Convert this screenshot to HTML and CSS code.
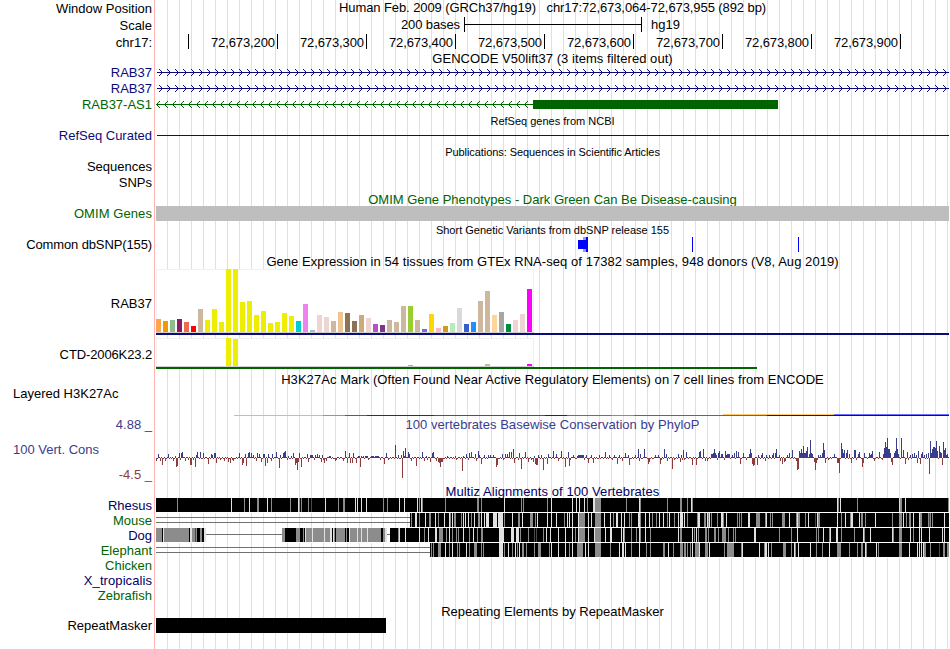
FILE: index.html
```html
<!doctype html>
<html lang="en-US">
<head>
<meta charset="utf-8" />
<meta name="viewport" content="width=device-width" />
<title>chr17:72,673,064-72,673,955</title>
<link rel="stylesheet" href="styles.css">
</head>
<body>
<div class="browser">
	<div class="row h16"><div class="label drop">Window Position</div><div class="title position">Human Feb. 2009 (GRCh37/hg19) &nbsp; chr17:72,673,064-72,673,955 (892 bp)</div></div>
	<div class="row h17"><div class="label drop">Scale</div>
		<svg class="track" id="scale" viewBox="156 0 794 17" height="17">
			<text x="460" y="13" text-anchor="end" textLength="59">200 bases</text>
			<rect x="464" y="1" width="1" height="15" /><rect x="464" y="8" width="178" height="1" /><rect x="641" y="1" width="1" height="15" />
			<text x="651" y="13">hg19</text>
		</svg>
	</div>
	<div class="row h18"><div class="label drop">chr17:</div><svg class="track" id="ruler" viewBox="156 0 794 18" height="18"></svg></div>

	<!-- genes -->
	<div class="row h14"><div class="title drop gencode">GENCODE V50lift37 (3 items filtered out)</div></div>
	<div class="row h15"><div class="label blue">RAB37</div><svg class="track arrows" data-y="7" data-end="949" viewBox="156 0 794 15" height="15"></svg></div>
	<div class="row h16"><div class="label drop blue">RAB37</div><svg class="track arrows" data-y="8" data-end="949" viewBox="156 0 794 16" height="16"></svg></div>
	<div class="row h16"><div class="label drop green">RAB37-AS1</div>
		<svg class="track arrows back" data-y="8" data-end="533" viewBox="156 0 794 16" height="16"><rect x="533" y="4" width="245" height="9" fill="#006400" /></svg>
	</div>
	<div class="row h17"><div class="title drop small refseq">RefSeq genes from NCBI</div></div>
	<div class="row h15 curated"><div class="label blue">RefSeq Curated</div>
		<svg class="track" viewBox="156 0 794 15" height="15"><rect x="157" y="6" width="792" height="1" fill="#0c0c78" /></svg>
	</div>
	<div class="row h15"><div class="title drop small pubs">Publications: Sequences in Scientific Articles</div></div>
	<div class="row h16"><div class="label">Sequences</div></div>
	<div class="row h16"><div class="label">SNPs</div></div>
	<div class="row h15"><div class="title drop green omim">OMIM Gene Phenotypes - Dark Green Can Be Disease-causing</div></div>
	<div class="row h15"><div class="label green wide">OMIM Genes</div><div class="omim-bar"></div></div>

	<!-- variants -->
	<div class="row h16"><div class="title drop small dbsnp">Short Genetic Variants from dbSNP release 155</div></div>
	<div class="row h15"><div class="label tight">Common dbSNP(155)</div>
		<svg class="track" viewBox="156 0 794 15" height="15" fill="#0000ff">
			<rect x="583" y="0" width="3" height="15" fill="#9696ff" />
			<rect x="578" y="3" width="8" height="9" />
			<rect x="586" y="0" width="2" height="15" />
			<rect x="692" y="0" width="1" height="15" />
			<rect x="798" y="0" width="1" height="15" />
		</svg>
	</div>

	<!-- expression -->
	<div class="row h17"><div class="title drop gtex">Gene Expression in 54 tissues from GTEx RNA-seq of 17382 samples, 948 donors (V8, Aug 2019)</div></div>
	<div class="row h69"><div class="label">RAB37</div><svg class="track" id="gtex1" viewBox="156 0 794 69" height="69"></svg></div>
	<div class="row h34"><div class="label tight">CTD-2006K23.2</div><svg class="track" id="gtex2" viewBox="156 0 794 34" height="34"></svg></div>

	<!-- regulation and conservation -->
	<div class="row h15"><div class="title h3k">H3K27Ac Mark (Often Found Near Active Regulatory Elements) on 7 cell lines from ENCODE</div></div>
	<div class="row h31"><div class="label left layered">Layered H3K27Ac</div><svg class="track" id="h3k" viewBox="156 0 794 31" height="31"></svg></div>
	<div class="row h66">
		<div class="limits">
			<div class="label cons">4.88 _</div>
			<div class="label left cons">100 Vert. Cons</div>
			<div class="label neg">-4.5 _</div>
		</div>
		<div>
			<div class="title cons phylop">100 vertebrates Basewise Conservation by PhyloP</div>
			<svg class="track" id="phylop" viewBox="156 0 794 50" height="50"></svg>
		</div>
	</div>

	<!-- alignments -->
	<div class="row h14"><div class="title drop navy multiz">Multiz Alignments of 100 Vertebrates</div></div>
	<div class="row h15"><div class="label navy">Rhesus</div><svg class="track" id="rhesus" viewBox="156 0 794 15" height="15"></svg></div>
	<div class="row h15"><div class="label green">Mouse</div><svg class="track" id="mouse" viewBox="156 0 794 15" height="15"></svg></div>
	<div class="row h15"><div class="label navy">Dog</div><svg class="track" id="dog" viewBox="156 0 794 15" height="15"></svg></div>
	<div class="row h15"><div class="label green">Elephant</div><svg class="track" id="elephant" viewBox="156 0 794 15" height="15"></svg></div>
	<div class="row h15"><div class="label green">Chicken</div></div>
	<div class="row h15"><div class="label navy wide">X_tropicalis</div></div>
	<div class="row h15"><div class="label green">Zebrafish</div></div>

	<div class="row h15"><div class="title drop repeats">Repeating Elements by RepeatMasker</div></div>
	<div class="row h15"><div class="label">RepeatMasker</div><div class="repeat-bar"></div></div>
</div>
<script src="tracks.js"></script>
</body>
</html>
```
FILE: styles.css
```css
body {
	margin: 0;
	background-color: #ffffff;
	color: #000000;
	font-family: "Liberation Sans", Arial, sans-serif;
	font-size: 13px;
	overflow: hidden;
}
.browser {
	width: 950px;
	height: 649px;
	/* red divider, then a guide line every 12px */
	background-image:
		linear-gradient(#ffb4b4, #ffb4b4),
		repeating-linear-gradient(90deg, transparent 0 11px, #dcdcff 11px 12px);
	background-size: 1px 100%, 794px 100%;
	background-position: 154px 0, 156px 0;
	background-repeat: no-repeat;
}
.row {
	display: grid;
	grid-template-columns: 152px 794px;
	column-gap: 4px;
	align-items: start;
}
.h14 { height: 14px; line-height: 14px; }
.h15 { height: 15px; line-height: 15px; }
.h16 { height: 16px; line-height: 16px; }
.h17 { height: 17px; line-height: 17px; }
.h18 { height: 18px; line-height: 18px; }
.h31 { height: 31px; line-height: 13px; }
.h34 { height: 34px; line-height: 34px; }
.h66 { height: 66px; line-height: 14px; }
.h69 { height: 69px; line-height: 69px; }
.curated { line-height: 13px; }
.label {
	text-align: right;
	white-space: nowrap;
}
.left {
	text-align: left;
	padding-left: 13px;
}
.title {
	grid-column: 2;
	text-align: center;
	white-space: nowrap;
	padding-right: 1px;
}
.drop {
	padding-top: 1px;
}
.small {
	font-size: 11px;
}
.tight { letter-spacing: -0.12px; }
.wide { letter-spacing: 0.08px; }
.position { letter-spacing: -0.085px; }
.gencode { letter-spacing: 0.05px; }
.pubs { letter-spacing: -0.065px; }
.gtex { letter-spacing: 0.055px; }
.h3k { letter-spacing: 0.06px; }
.phylop { letter-spacing: 0.04px; }
.multiz { letter-spacing: 0.08px; }
.track {
	display: block;
	width: 794px;
	shape-rendering: crispEdges;
}
.blue { color: #0c0c78; }
.navy { color: #000064; }
.green { color: #006400; }
.cons { color: #3c3c8c; }
.neg { color: #8c3c3c; }
.limits {
	display: flex;
	flex-direction: column;
	justify-content: space-between;
	height: 64px;
}
#phylop {
	margin-top: 2px;
}
.omim-bar {
	width: 793px;
	height: 15px;
	background-color: #bebebe;
}
.repeat-bar {
	width: 230px;
	height: 15px;
	background-color: #000000;
}
```
FILE: tracks.js
```js
const NS = "http://www.w3.org/2000/svg";
const byId = (id) => document.getElementById(id);

function rect(svg, x, y, w, h, fill) {
	const r = document.createElementNS(NS, "rect");
	r.setAttribute("x", x);
	r.setAttribute("y", y);
	r.setAttribute("width", w);
	r.setAttribute("height", h);
	r.setAttribute("fill", fill);
	svg.appendChild(r);
}

// ruler, a tick every 100 bases
for (let i = 0; i < 9; i++) {
	const x = 188 + i * 89;
	rect(byId("ruler"), x, 1, 1, 15, "#000");
	if (i > 0) {
		const t = document.createElementNS(NS, "text");
		t.setAttribute("x", x - 2);
		t.setAttribute("y", 14);
		t.setAttribute("text-anchor", "end");
		t.setAttribute("textLength", 64);
		t.textContent = `72,673,${i + 1}00`;
		byId("ruler").appendChild(t);
	}
}

// introns with strand arrows, drawn pixel by pixel
document.querySelectorAll(".arrows").forEach((svg) => {
	const y = Number(svg.dataset.y);
	const end = Number(svg.dataset.end);
	const back = svg.classList.contains("back");
	const color = back ? "#006400" : "#0c0c78";
	rect(svg, back ? 156 : 157, y, end - (back ? 156 : 157), 1, color);
	for (let x = back ? 156 : 162; x < end - 2; x += 8) {
		for (let d = 1; d < 4; d++) {
			rect(svg, back ? x + d : x - d, y - d, 1, 1, color);
			rect(svg, back ? x + d : x - d, y + d, 1, 1, color);
		}
	}
});

// GTEx tissues
const yellow = Array(13).fill("#eeee00");
const tissues = ["#ffa54f", "#ee9a00", "#8fbc8f", "#8b1c62", "#ee6a50", "#ff0000", "#cdb79e", ...yellow,
	"#00cdcd", "#ee82ee", "#9ac0cd", "#eed5d2", "#eed5d2", "#cdb79e", "#eec591", "#8b7355", "#8b7355", "#cdaa7d",
	"#eed5d2", "#b452cd", "#7a378b", "#cdb79e", "#cdb79e", "#cdb79e", "#9acd32", "#cdb79e", "#7a67ee", "#ffd700",
	"#ffb6c1", "#cd9b1d", "#b4eeb4", "#d9d9d9", "#3a5fcd", "#1e90ff", "#cdb79e", "#cdb79e", "#ffd39b", "#a6a6a6",
	"#008b45", "#eed5d2", "#eed5d2", "#ff00ff"];
const rab37 = [13, 11, 12, 13, 10, 6, 23, 12, 23, 10, 63, 63, 30, 31, 17, 21, 9, 10, 19, 16, 11, 28, 2, 17, 15, 11, 20,
	19, 11, 17, 14, 8, 7, 12, 10, 26, 26, 12, 3, 18, 4, 6, 9, 24, 8, 10, 31, 41, 17, 20, 8, 12, 18, 43];
const ctd = { 10: 28, 11: 27, 36: 1, 47: 2, 53: 2 };

function expression(svg, values, height, lineEnd, lineColor) {
	rect(svg, 156, 0, 378, height + 1, "#f0f0f0");
	rect(svg, 157, 1, 376, height - 1, "#fff");
	rect(svg, 156, height, 378, 1, "#d0d0d0");
	tissues.forEach((color, i) => {
		const h = values[i] || 0;
		if (h > 0) rect(svg, 156 + i * 7, height - h, 5, h, color);
	});
	rect(svg, 156, height + 1, lineEnd - 156, 2, lineColor);
}
expression(byId("gtex1"), rab37, 63, 949, "#0c0c78");
expression(byId("gtex2"), ctd, 28, 757, "#006400");

// H3K27Ac, start, end and color of each piece
[[234, 323, "#87cefa"], [323, 345, "#74ac7c"], [345, 367, "#64508c"], [367, 434, "#501e50"], [434, 545, "#c81e32"],
	[545, 567, "#5a1414"], [567, 611, "#786878"], [611, 634, "#6ca06c"], [634, 767, "#786440"], [767, 834, "#1e1e1e"],
	[834, 949, "#14143c"]].forEach(([from, to, color]) => rect(byId("h3k"), from, 28, to - from, 1, color));
rect(byId("h3k"), 723, 27, 111, 1, "#ffc864");
rect(byId("h3k"), 834, 27, 115, 1, "#6e6eff");

// PhyloP scores as x:height
const up = "158:4 168:4 175:2 179:5 181:5 182:6 196:3 197:6 200:6 203:5 211:4 212:3 214:5 215:5 239:5 245:4 248:5 249:6 251:5 253:3 257:5 259:4 263:4 264:4 268:4 272:4 276:6 280:3 283:5 284:6 285:7 288:2 291:2 293:5 299:5 307:4 310:3 311:3 312:3 315:3 317:4 319:3 322:3 328:1 329:2 330:2 345:7 349:5 353:5 358:2 359:2 361:2 363:2 365:2 366:2 367:2 371:2 372:2 373:2 375:2 376:2 377:2 378:2 386:5 395:13 398:3 401:3 403:7 404:2 405:10 408:6 409:4 " +
	"422:6 426:2 432:5 433:6 447:2 455:2 463:2 466:4 469:5 471:6 475:4 478:7 479:3 484:3 488:3 490:3 493:3 502:4 505:4 507:4 509:6 511:6 513:9 519:5 525:6 534:2 538:3 541:3 548:4 553:7 556:4 561:7 568:6 573:3 577:2 578:3 579:3 580:3 581:3 582:3 583:3 586:3 591:3 599:3 605:6 609:3 614:3 619:3 625:5 628:3 635:3 638:9 640:4 644:9 655:3 658:3 664:9 666:4 678:4 681:3 " +
	"683:8 686:6 699:6 700:7 703:9 711:4 712:4 713:5 714:9 715:5 716:3 718:5 719:7 721:4 722:4 725:7 726:3 727:4 728:4 729:4 732:3 734:5 736:7 738:6 743:5 749:4 750:9 751:5 758:3 761:3 762:5 766:3 769:3 772:3 773:5 775:5 776:9 779:3 787:3 789:5 792:8 799:7 800:5 801:9 802:5 803:12 804:5 805:5 806:7 807:11 809:4 810:18 811:5 812:4 818:3 820:3 822:5 823:15 824:8 834:4 841:15 842:9 843:5 844:8 846:5 847:8 849:4 854:8 855:8 858:4 859:6 864:5 869:5 870:3 871:4 872:7 879:6 883:4 884:10 885:16 886:11 887:20 888:9 889:9 890:5 894:5 895:7 896:20 897:9 898:4 901:20 903:8 907:6 910:3 912:4 914:5 916:3 918:7 921:4 922:6 924:3 926:4 928:5 930:17 931:5 932:9 933:11 934:11 935:10 936:17 937:7 939:12 940:6 941:5 943:16 944:8 945:10 946:3 947:4";
const down = "156:3 160:3 162:7 165:3 173:3 176:9 177:8 185:3 188:2 190:7 191:7 195:9 203:2 208:6 216:5 220:2 224:3 228:4 230:5 233:3 242:7 243:5 246:8 251:3 256:3 261:4 265:8 267:5 271:3 279:10 280:5 287:2 295:7 296:5 297:12 298:4 301:9 308:4 314:2 321:4 324:5 326:3 335:3 343:3 347:5 350:5 352:5 356:5 360:9 368:2 380:2 384:6 386:5 402:20 411:3 416:8 424:3 430:4 436:3 438:4 439:5 440:9 441:4 442:4 456:2 462:13 468:2 476:3 481:6 496:9 497:7 503:2 514:5 521:11 528:4 533:4 534:7 535:6 536:7 537:7 543:12 547:6 558:3 565:9 569:8 584:2 588:5 593:5 599:3 612:2 617:6 622:3 629:7 639:3 648:6 649:4 660:6 667:3 672:11 680:4 682:2 684:2 692:7 696:7 705:3 707:3 717:2 724:2 732:3 740:6 746:2 752:6 753:8 754:7 757:7 765:3 780:3 782:6 784:4 785:3 796:3 797:12 798:11 814:4 815:12 816:5 825:5 828:2 837:5 838:5 839:15 851:5 855:2 859:4 862:9 863:5 874:3 882:2 891:4 892:7 905:6 917:5 920:6 922:3 924:5 926:3 929:16 942:7";
const parse = (s) => new Map(s.split(" ").map((p) => p.split(":").map(Number)));
const ups = parse(up);
const downs = parse(down);
// zero line sits at y 24, every base goes either up or down from it
for (let x = 156; x < 949; x++) {
	if (ups.has(x)) {
		rect(byId("phylop"), x, 24 - ups.get(x), 1, ups.get(x), "#3c3c8c");
	} else if (downs.has(x)) {
		rect(byId("phylop"), x, 24, 1, downs.get(x), "#8c3c3c");
	} else if ((x * 7) % 11 < 6) {
		rect(byId("phylop"), x, 23, 1, 1, "#3c3c8c");
	} else {
		rect(byId("phylop"), x, 24, 1, (x * 5) % 13 === 3 ? 2 : 1, "#8c3c3c");
	}
}

// alignments: position, shade (B black, D dark, G gray, L light) and width
const shades = { B: "#000", D: "#484848", G: "#8c8c8c", L: "#e1e1e1" };
function align(id, blocks, stripes, lines) {
	const svg = byId(id);
	lines.forEach(([from, to, y]) => rect(svg, from, y, to - from, 1, "#707070"));
	blocks.forEach(([from, to]) => rect(svg, from, 0, to - from, 14, "#000"));
	blocks.forEach(([from, to]) => rect(svg, from, 14, to - from, 1, "#fff"));
	stripes.split(" ").forEach((s) => {
		const [, x, shade, w] = s.match(/(\d+)([BDGL])(\d*)/);
		rect(svg, x, 0, w || 1, 14, shades[shade]);
	});
}
align("rhesus", [[156, 949]], "177G 231L 244G 249L 257G2 267L 271G 290G 298L 299G 301G 308G 311D 325L 338G 343G2 355L 357L 361L 366L 383G 387G 399L 404L 417L 419G 421L 422G 445G 477G2 481G 504L 521G 523G 547G 551L 572L 576L 579L 584L 587G 593L 594L 595G6 626G 639L 640G 667G 680G2 687G 691L 692G 837L 838G 840L 857G 899L 900G2 905L 948G", []);
align("mouse", [[410, 949]], "411G 415L 416L 419G 425L 429G2 435L 438G 444L 449L 450G 452L 454G2 461G 463L 465L 468L 471G 474L 478G2 481L 484L 486L3 493L4 498L5 504G 512L 518G2 522L 530G3 535G 537L 547L 551L 556L 564G 567L 569L 572L 578L 579G6 588L 591L 595G6 604L 610L 613G 616L2 621L 624L 629G 631G 638L2 640G 645L 649L 652G 656G 659L 663L 667G 669L 674G 678L 680L3 684L 687G 697G 698L2 704G2 707L 708G 709L 711G 717G 721L2 723G 726L 737G 739G 741G 748L2 756G3 759G 765G 766L 770G 772G 782G3 789L 796G 797L 798G2 805G 808L 815D 817L 818G2 837L 841G 845L 850G 851L2 859L 861G2 865G 875L 892G 899G3 903L 906G 909G2 913L 919L 920G 921G 928G 929D 930G 932G 944L", [[156, 410, 4], [156, 410, 9]]);
align("dog", [[156, 206], [282, 387], [390, 949]], "156G6 163L 164G25 190L2 192G3 195D 196G 200G2 204L2 282G3 296G4 303G 305L 306G6 312L 313G11 324L 325G5 330L2 333L 334G 336G9 346G 349L 350G 351G6 357L 358G3 361L 362G5 367L 368G13 383G2 385L2 398G 399L 405L 419L 424G 428L 435L2 439G4 446G 449L 452G 456G 458G 463L 469G 473L 477G 481G2 499L5 511L3 516L3 520G 528G 534D 536D 543G 546L 550L 558L 565L 572L 575G 578L 579G6 588L 594L 595G6 605L 610L2 621L 623L 624G 631G 636G 639L 640G 645L 650G 678L 680G2 692L 694G 696L 698G 705G2 708G 714G2 718G 722G4 728G 733G 735G 754L2 779G 791G 797L 816G 818G 823L 829G 830L 836L 837L 841G 854G 863L 864G 870L 892L 893G 899G3 910L 913G 919L 921L 929L 942L 944L", [[206, 282, 6], [387, 390, 6]]);
align("elephant", [[430, 949]], "431G 433G 438G3 445L 449G 452L 457G 459G 466L 469G 474G3 481G 483G 499L4 504G 508L 512G 515L 517G 519L 522G2 526G 534G 538G3 549G 551L 558L 565L 569G 572L 577G6 585L 588L 595G6 610G 619L 622L2 625L 631G 639L 646G 650G 663G2 668L 673G 680G3 684G2 687G 690G 692L 695G4 699L 705G3 709L 724G 727G7 741G 742L 759L 764G 765L 766L 768L 771G 783G3 791G 794L 795G 798L 810L 816G 822G 829L 837G4 849G 857G 861G2 865L 866G 876L 878G 899G3 909L 917L 919L 921L 923L 924G2 930G 939D 943G2 947G2", [[156, 430, 4], [156, 430, 9]]);
```
